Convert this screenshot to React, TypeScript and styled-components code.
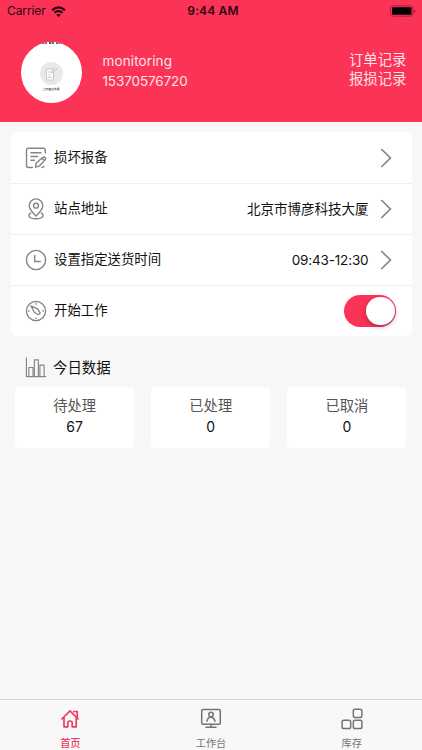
import React from "react";
import styled, { createGlobalStyle } from "styled-components";

const Global = createGlobalStyle`
  * { box-sizing: border-box; }
  html, body { margin: 0; background: #f7f7f7; }
  body { font-family: Inter, "Noto Sans CJK SC", sans-serif; color: #111; }
  svg { display: block; flex: none; }
`;

const Screen = styled.div`
  width: 422px;
  height: 750px;
  display: flex;
  flex-direction: column;
  background: #f7f7f7;
  overflow: hidden;
`;

const Header = styled.header`
  height: 122.4px;
  flex: none;
  background: #fb3357;
`;

const StatusBar = styled.div`
  height: 22px;
  display: grid;
  grid-template-columns: 1fr auto 1fr;
  align-items: center;
  padding: 0 6px 0 7px;
  color: #2a0810;
`;

const Carrier = styled.div`
  display: flex;
  align-items: center;
  gap: 5px;
  font-size: 12px;
  line-height: 22px;
  letter-spacing: -0.1px;
`;

const Clock = styled.div`
  font-size: 12px;
  font-weight: 600;
  line-height: 22px;
  letter-spacing: 0.15px;
  padding-left: 3px;
`;

const BatterySlot = styled.div`
  display: flex;
  justify-content: flex-end;
`;

const Profile = styled.div`
  display: flex;
  padding: 19.5px 15.5px 0 20.5px;
`;

const Avatar = styled.div`
  width: 61.5px;
  height: 61.5px;
  border-radius: 50%;
  background: #fff;
  overflow: hidden;
  display: flex;
  flex-direction: column;
  align-items: center;
`;

const AvatarTop = styled.div`
  width: 18px;
  height: 2px;
  background: repeating-linear-gradient(90deg, #555 0 2px, #bbb 2px 3px, #666 3px 5px, #fff 5px 7px);
  margin-bottom: 18.5px;
`;

const AvatarDisc = styled.div`
  width: 23px;
  height: 23px;
  border-radius: 50%;
  background: #e9e9e9;
  display: flex;
  align-items: center;
  justify-content: center;
`;

const AvatarCaption = styled.div`
  font-size: 12px;
  line-height: 12px;
  height: 12px;
  white-space: nowrap;
  transform: scale(0.235);
  transform-origin: top center;
  margin-top: 3px;
`;

const Lines = styled.div<{ $size: number; $top: number }>`
  display: flex;
  flex-direction: column;
  color: #ffe3e8;
  font-size: ${(p) => p.$size}px;
  line-height: 19.6px;
  padding-top: ${(p) => p.$top}px;
`;

const Identity = styled(Lines)`
  flex: 1;
  margin-left: 20.5px;
`;

const UserName = styled.span`
  letter-spacing: 0.12px;
`;

const Phone = styled.span`
  letter-spacing: -0.12px;
`;

const Card = styled.section`
  margin: 10px 10.5px 0;
  height: 204px;
  border-radius: 5px;
  background: #fff;
  display: flex;
  flex-direction: column;
`;

const Row = styled.div`
  height: 51px;
  display: flex;
  align-items: center;
  padding: 0 15.5px 0 14px;
  & + & { box-shadow: inset 0 1px 0 #efefef; }
`;

const RowLabel = styled.div`
  flex: 1;
  margin-left: 7.5px;
  font-size: 13.4px;
  line-height: 20px;
  padding-bottom: 2px;
`;

const RowValue = styled.div<{ $spacing?: number }>`
  font-size: 13.5px;
  line-height: 20px;
  letter-spacing: ${(p) => p.$spacing ?? 0}px;
`;

const ChevronSlot = styled.div`
  margin: 0 4.5px 0 11px;
`;

const Toggle = styled.div`
  width: 52px;
  height: 31.5px;
  border-radius: 16px;
  background: #fb3357;
  padding: 1.5px;
  display: flex;
  justify-content: flex-end;
`;

const Knob = styled.div`
  width: 28.5px;
  height: 28.5px;
  border-radius: 50%;
  background: #fff;
  box-shadow: 0 2px 5px rgba(0, 0, 0, 0.28);
`;

const SectionTitle = styled.h2`
  margin: 19.6px 0 0;
  padding-left: 24.5px;
  height: 24px;
  display: flex;
  align-items: center;
  gap: 7.5px;
  font-size: 14.4px;
  font-weight: 400;
  line-height: 24px;
`;

const Stats = styled.div`
  display: grid;
  grid-template-columns: repeat(3, 1fr);
  gap: 17px;
  padding: 0 15.5px 0 15px;
  margin-top: 7px;
`;

const Stat = styled.div`
  height: 61px;
  border-radius: 4px;
  background: #fff;
  text-align: center;
  padding-top: 9px;
`;

const StatName = styled.div`
  font-size: 14.3px;
  line-height: 20px;
  color: #555;
`;

const StatValue = styled.div`
  font-size: 14px;
  line-height: 21px;
`;

const TabBar = styled.nav`
  margin-top: auto;
  height: 51px;
  flex: none;
  border-top: 1px solid #d8d8d8;
  background: #f8f8f8;
  display: grid;
  grid-template-columns: repeat(3, 1fr);
`;

const Tab = styled.div<{ $active?: boolean }>`
  display: flex;
  flex-direction: column;
  align-items: center;
  padding-top: 8px;
  color: ${(p) => (p.$active ? "#ed3d5d" : "#747474")};
  font-size: 10.2px;
  font-weight: ${(p) => (p.$active ? 500 : 400)};
  line-height: 14px;
  gap: 6px;
`;

const Icon = ({ size = 22, children, width = 1.4, color = "#858585" }: {
  size?: number; children: React.ReactNode; width?: number; color?: string;
}) => (
  <svg width={size} height={size} viewBox="0 0 22 22" fill="none" stroke={color}
    strokeWidth={width} strokeLinecap="round" strokeLinejoin="round">{children}</svg>
);

const ReportIcon = () => (
  <Icon>
    <path d="M20.3 6V3.2Q20.3 1.3 18.4 1.3H3.5Q1.5 1.3 1.5 3.3V18.5Q1.5 20.5 3.5 20.5H7.5M6 5.8H16M6 9.5H12.5M6 13.2H9.5" />
    <path d="M11 16.3L17.8 10.3Q19.2 9.5 20.2 10.5Q21.2 11.6 20 12.9L14.2 19.2L10.6 20.2ZM17 11.2L19.3 13.4M18.9 19.6L17 20.5" />
  </Icon>
);
const PinIcon = () => (
  <Icon>
    <path d="M11 18C8 15 4.2 11.5 4.2 7.7A6.8 6.8 0 0 1 17.8 7.7C17.8 11.5 14 15 11 18Z" />
    <circle cx="11" cy="7.7" r="2.4" />
    <path d="M5.7 15.1C2.4 16.8 3.3 20.7 11 20.7C18.7 20.7 19.6 16.8 16.3 15.1" />
  </Icon>
);
const ClockIcon = () => (
  <Icon><circle cx="11" cy="11" r="9.6" /><path d="M9.7 6V12.5H15.8" strokeLinecap="butt" strokeLinejoin="miter" /></Icon>
);
const CompassIcon = () => (
  <Icon width={1.3}>
    <circle cx="11" cy="11" r="9.6" />
    <path d="M5.8 5.8L12.6 8.8L15.2 13.2L13.4 14.7L9.3 12.2ZM11 3.5V4.2M11 17.8V18.5M3.5 11H4.2M17.8 11H18.5" />
  </Icon>
);
const ChartIcon = () => (
  <Icon size={21} width={1.2}>
    <path d="M1.5 1V20.6H21.5M4 20.3V11H8.4V20.3M9.8 20.3V3H14V20.3M15.6 20.3V8.5H20V20.3" strokeLinecap="square" />
  </Icon>
);
const Chevron = () => (
  <svg width="12" height="20" viewBox="0 0 12 20" fill="none" stroke="#858585" strokeWidth="1.7">
    <path d="M1.3 1L10.4 10L1.3 19" />
  </svg>
);
const Wifi = () => (
  <svg width="15" height="11" viewBox="0 0 15 11" fill="none" stroke="#250008" strokeWidth="2">
    <path d="M1 4.2Q7.5-1.4 14 4.2M3.4 6.8Q7.5 3.2 11.6 6.8" />
    <path d="M5.3 8.7Q7.5 6.8 9.7 8.7L7.5 11Z" fill="#250008" stroke="none" />
  </svg>
);
const Battery = () => (
  <svg width="26" height="12" viewBox="0 0 26 12">
    <rect x="0.5" y="0.8" width="22.5" height="10.4" rx="2.4" fill="none" stroke="#a8203f" />
    <rect x="2" y="2.3" width="19.5" height="7.4" rx="1" fill="#000" />
    <path d="M24.2 4.2Q26.6 6 24.2 7.8Z" fill="#8a1c34" />
  </svg>
);
const HomeIcon = () => (
  <Icon width={1.7} color="#ed3d5d">
    <path d="M2.8 11L11 2.8L19.2 11M5 9.5V18.8H8.8V14.8Q8.8 13 11 13Q13.2 13 13.2 14.8V18.8H17.2V9.5M14.7 3.5H18.2V8.5" />
  </Icon>
);
const WorkIcon = () => (
  <Icon width={1.5} color="#747474">
    <rect x="1.7" y="1.5" width="18.6" height="14.8" rx="1.3" />
    <circle cx="11" cy="6.5" r="2.3" />
    <path d="M7 13.2Q7.5 9.4 11 9Q14 9.6 15 13.2M11 16.3V19M6 19.2H16" />
  </Icon>
);
const StockIcon = () => (
  <Icon width={1.5} color="#747474">
    <rect x="12.3" y="1.2" width="8.6" height="8.2" rx="1.8" />
    <rect x="1.1" y="12.3" width="8.6" height="8.3" rx="1.8" />
    <rect x="12.3" y="12.3" width="8.6" height="8.3" rx="1.8" />
  </Icon>
);
const NoteIcon = () => (
  <svg width="13" height="14" viewBox="0 0 13 14" fill="#fff" stroke="#bcbcbc" strokeWidth="0.8">
    <path d="M1.5 2H8.5V13H1.5ZM3 5H6M3 8H6M3 10.5H7M6 5L11 1L12 2L7 6Z" />
  </svg>
);

const stats = [["待处理", "67"], ["已处理", "0"], ["已取消", "0"]];

export default function App() {
  return (
    <Screen>
      <Global />
      <Header>
        <StatusBar>
          <Carrier>Carrier <Wifi /></Carrier>
          <Clock>9:44 AM</Clock>
          <BatterySlot><Battery /></BatterySlot>
        </StatusBar>
        <Profile>
          <Avatar>
            <AvatarTop />
            <AvatarDisc><NoteIcon /></AvatarDisc>
            <AvatarCaption>上传营业执照</AvatarCaption>
          </Avatar>
          <Identity $size={13.5} $top={10.5}>
            <UserName>monitoring</UserName><Phone>15370576720</Phone>
          </Identity>
          <Lines $size={14.4} $top={8}>
            <span>订单记录</span><span>报损记录</span>
          </Lines>
        </Profile>
      </Header>
      <Card>
        <Row><ReportIcon /><RowLabel>损坏报备</RowLabel><ChevronSlot><Chevron /></ChevronSlot></Row>
        <Row><PinIcon /><RowLabel>站点地址</RowLabel><RowValue>北京市博彦科技大厦</RowValue><ChevronSlot><Chevron /></ChevronSlot></Row>
        <Row><ClockIcon /><RowLabel>设置指定送货时间</RowLabel><RowValue $spacing={-0.15}>09:43-12:30</RowValue><ChevronSlot><Chevron /></ChevronSlot></Row>
        <Row><CompassIcon /><RowLabel>开始工作</RowLabel><Toggle><Knob /></Toggle></Row>
      </Card>
      <SectionTitle><ChartIcon />今日数据</SectionTitle>
      <Stats>
        {stats.map(([name, value]) => (
          <Stat key={name}><StatName>{name}</StatName><StatValue>{value}</StatValue></Stat>
        ))}
      </Stats>
      <TabBar>
        <Tab $active><HomeIcon />首页</Tab>
        <Tab><WorkIcon />工作台</Tab>
        <Tab><StockIcon />库存</Tab>
      </TabBar>
    </Screen>
  );
}
